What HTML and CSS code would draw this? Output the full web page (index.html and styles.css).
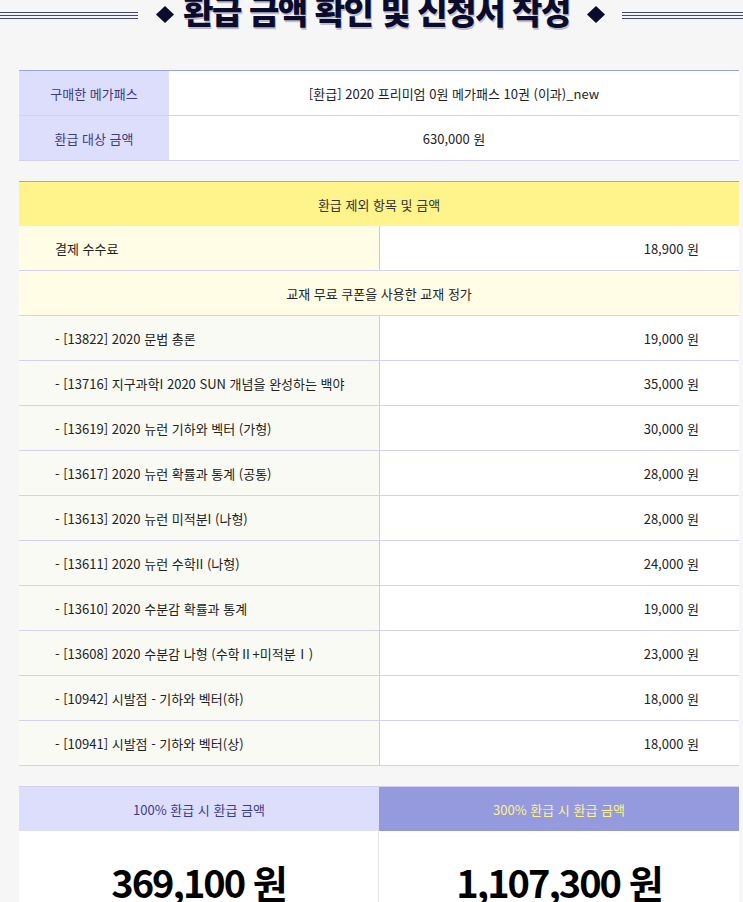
FILE: index.html
```html
<!DOCTYPE html>
<html lang="ko">
<head>
<meta charset="utf-8">
<title>환급 금액 확인 및 신청서 작성</title>
<link rel="stylesheet" href="styles.css">
</head>
<body>
<div class="page">
  <div class="title">
    <div class="lines lines-left"></div>
    <svg class="diamond d-left" width="18" height="17" viewBox="0 0 18 17"><polygon points="9,0 18,8.5 9,17 0,8.5" fill="#0b0b2b"/></svg>
    <div class="title-text"><h1>환급 금액 확인 및 신청서 작성</h1></div>
    <svg class="diamond d-right" width="18" height="17" viewBox="0 0 18 17"><polygon points="9,0 18,8.5 9,17 0,8.5" fill="#0b0b2b"/></svg>
    <div class="lines lines-right"></div>
  </div>

  <div class="content">
    <div class="info">
      <div class="info-row">
        <div class="info-label">구매한 메가패스</div>
        <div class="info-value">[환급] 2020 프리미엄 0원 메가패스 10권 (이과)_new</div>
      </div>
      <div class="info-row">
        <div class="info-label">환급 대상 금액</div>
        <div class="info-value">630,000 원</div>
      </div>
    </div>

    <div class="deduct">
      <div class="deduct-head">환급 제외 항목 및 금액</div>
      <div class="row fee">
        <div class="cell-name">결제 수수료</div>
        <div class="cell-price">18,900 원</div>
      </div>
      <div class="sub-head">교재 무료 쿠폰을 사용한 교재 정가</div>
      <div class="row item"><div class="cell-name">- [13822] 2020 문법 총론</div><div class="cell-price">19,000 원</div></div>
      <div class="row item"><div class="cell-name">- [13716] 지구과학I 2020 SUN 개념을 완성하는 백야</div><div class="cell-price">35,000 원</div></div>
      <div class="row item"><div class="cell-name">- [13619] 2020 뉴런 기하와 벡터 (가형)</div><div class="cell-price">30,000 원</div></div>
      <div class="row item"><div class="cell-name">- [13617] 2020 뉴런 확률과 통계 (공통)</div><div class="cell-price">28,000 원</div></div>
      <div class="row item"><div class="cell-name">- [13613] 2020 뉴런 미적분I (나형)</div><div class="cell-price">28,000 원</div></div>
      <div class="row item"><div class="cell-name">- [13611] 2020 뉴런 수학II (나형)</div><div class="cell-price">24,000 원</div></div>
      <div class="row item"><div class="cell-name">- [13610] 2020 수분감 확률과 통계</div><div class="cell-price">19,000 원</div></div>
      <div class="row item"><div class="cell-name">- [13608] 2020 수분감 나형 (수학Ⅱ+미적분Ⅰ)</div><div class="cell-price">23,000 원</div></div>
      <div class="row item"><div class="cell-name">- [10942] 시발점 - 기하와 벡터(하)</div><div class="cell-price">18,000 원</div></div>
      <div class="row item"><div class="cell-name">- [10941] 시발점 - 기하와 벡터(상)</div><div class="cell-price">18,000 원</div></div>
    </div>

    <div class="result">
      <div class="res-head res-100">100% 환급 시 환급 금액</div>
      <div class="res-head res-300">300% 환급 시 환급 금액</div>
      <div class="res-value res-v100">369,100 원</div>
      <div class="res-value">1,107,300 원</div>
    </div>
  </div>
</div>
</body>
</html>
```

FILE: styles.css
```css
html, body {
  margin: 0;
  padding: 0;
  background: #f6f6f6;
}
body {
  font-family: "Noto Sans CJK KR", "Noto Sans", sans-serif;
  font-size: 13px;
  color: #222;
}
.page {
  width: 743px;
  overflow: hidden;
}
.title {
  display: flex;
  align-items: center;
  height: 30px;
  margin-top: -1px;
}
.lines {
  height: 7px;
  background: linear-gradient(#46467a 0 1px, transparent 1px 3px, #46467a 3px 4px, transparent 4px 6px, #46467a 6px 7px);
  margin-top: 3px;
}
.lines-left {
  flex: 0 0 138px;
}
.lines-right {
  flex: 1 1 auto;
}
.diamond {
  flex: 0 0 auto;
}
.d-left {
  margin-left: 18px;
  margin-right: 9px;
}
.d-right {
  margin-left: 17px;
  margin-right: 17px;
}
.title-text {
  flex: 0 0 387px;
  display: flex;
  justify-content: center;
}
.title-text h1 {
  margin: 0 0 9px 0;
  white-space: nowrap;
  font-size: 33px;
  font-weight: 900;
  letter-spacing: -1.4px;
  line-height: 30px;
  color: #0b0b2b;
  text-shadow: 1px 2px 0 rgba(140, 140, 175, 0.55);
}

.content {
  margin-left: 19px;
  width: 720px;
  padding-top: 41px;
}

/* info table */
.info {
  border-top: 1px solid #9ea2e2;
  background: #fff;
}
.info-row {
  display: grid;
  grid-template-columns: 150px 1fr;
  height: 45px;
  border-bottom: 1px solid #d2d2f0;
  box-sizing: border-box;
}
.info-label {
  background: #dcdefc;
  color: #3c3c78;
  display: flex;
  align-items: center;
  justify-content: center;
}
.info-value {
  display: flex;
  align-items: center;
  justify-content: center;
  color: #222;
}

/* deduction table */
.deduct {
  margin-top: 20px;
  border-top: 1px solid #9ea2e2;
}
.deduct-head {
  background: #fff38b;
  height: 44px;
  display: flex;
  align-items: center;
  justify-content: center;
  color: #333;
}
.sub-head {
  background: #fffde6;
  height: 45px;
  box-sizing: border-box;
  border-bottom: 1px solid #d2d2f0;
  display: flex;
  align-items: center;
  justify-content: center;
}
.row {
  display: grid;
  grid-template-columns: 361px 1fr;
  height: 45px;
  box-sizing: border-box;
  border-bottom: 1px solid #d2d2f0;
}
.cell-name {
  padding-left: 36px;
  display: flex;
  align-items: center;
  border-right: 1px solid #cacaee;
}
.cell-price {
  background: #fff;
  display: flex;
  align-items: center;
  justify-content: flex-end;
  padding-right: 40px;
}
.fee .cell-name {
  background: #fffde6;
}
.item .cell-name {
  background: #f9faf4;
}

/* result */
.result {
  margin-top: 20px;
  border-top: 1px solid #d2d2f0;
  display: grid;
  grid-template-columns: 360px 1fr;
}
.res-head {
  height: 44px;
  display: flex;
  align-items: center;
  justify-content: center;
}
.res-100 {
  background: #dcdefc;
  color: #3c3c8a;
}
.res-300 {
  background: #9599de;
  color: #fff38a;
}
.res-value {
  background: #fff;
  height: 100px;
  display: flex;
  align-items: center;
  justify-content: center;
  font-size: 38px;
  font-weight: 700;
  letter-spacing: -2px;
  color: #000;
}
.res-v100 {
  border-right: 1px solid #e6e6e6;
}
```
